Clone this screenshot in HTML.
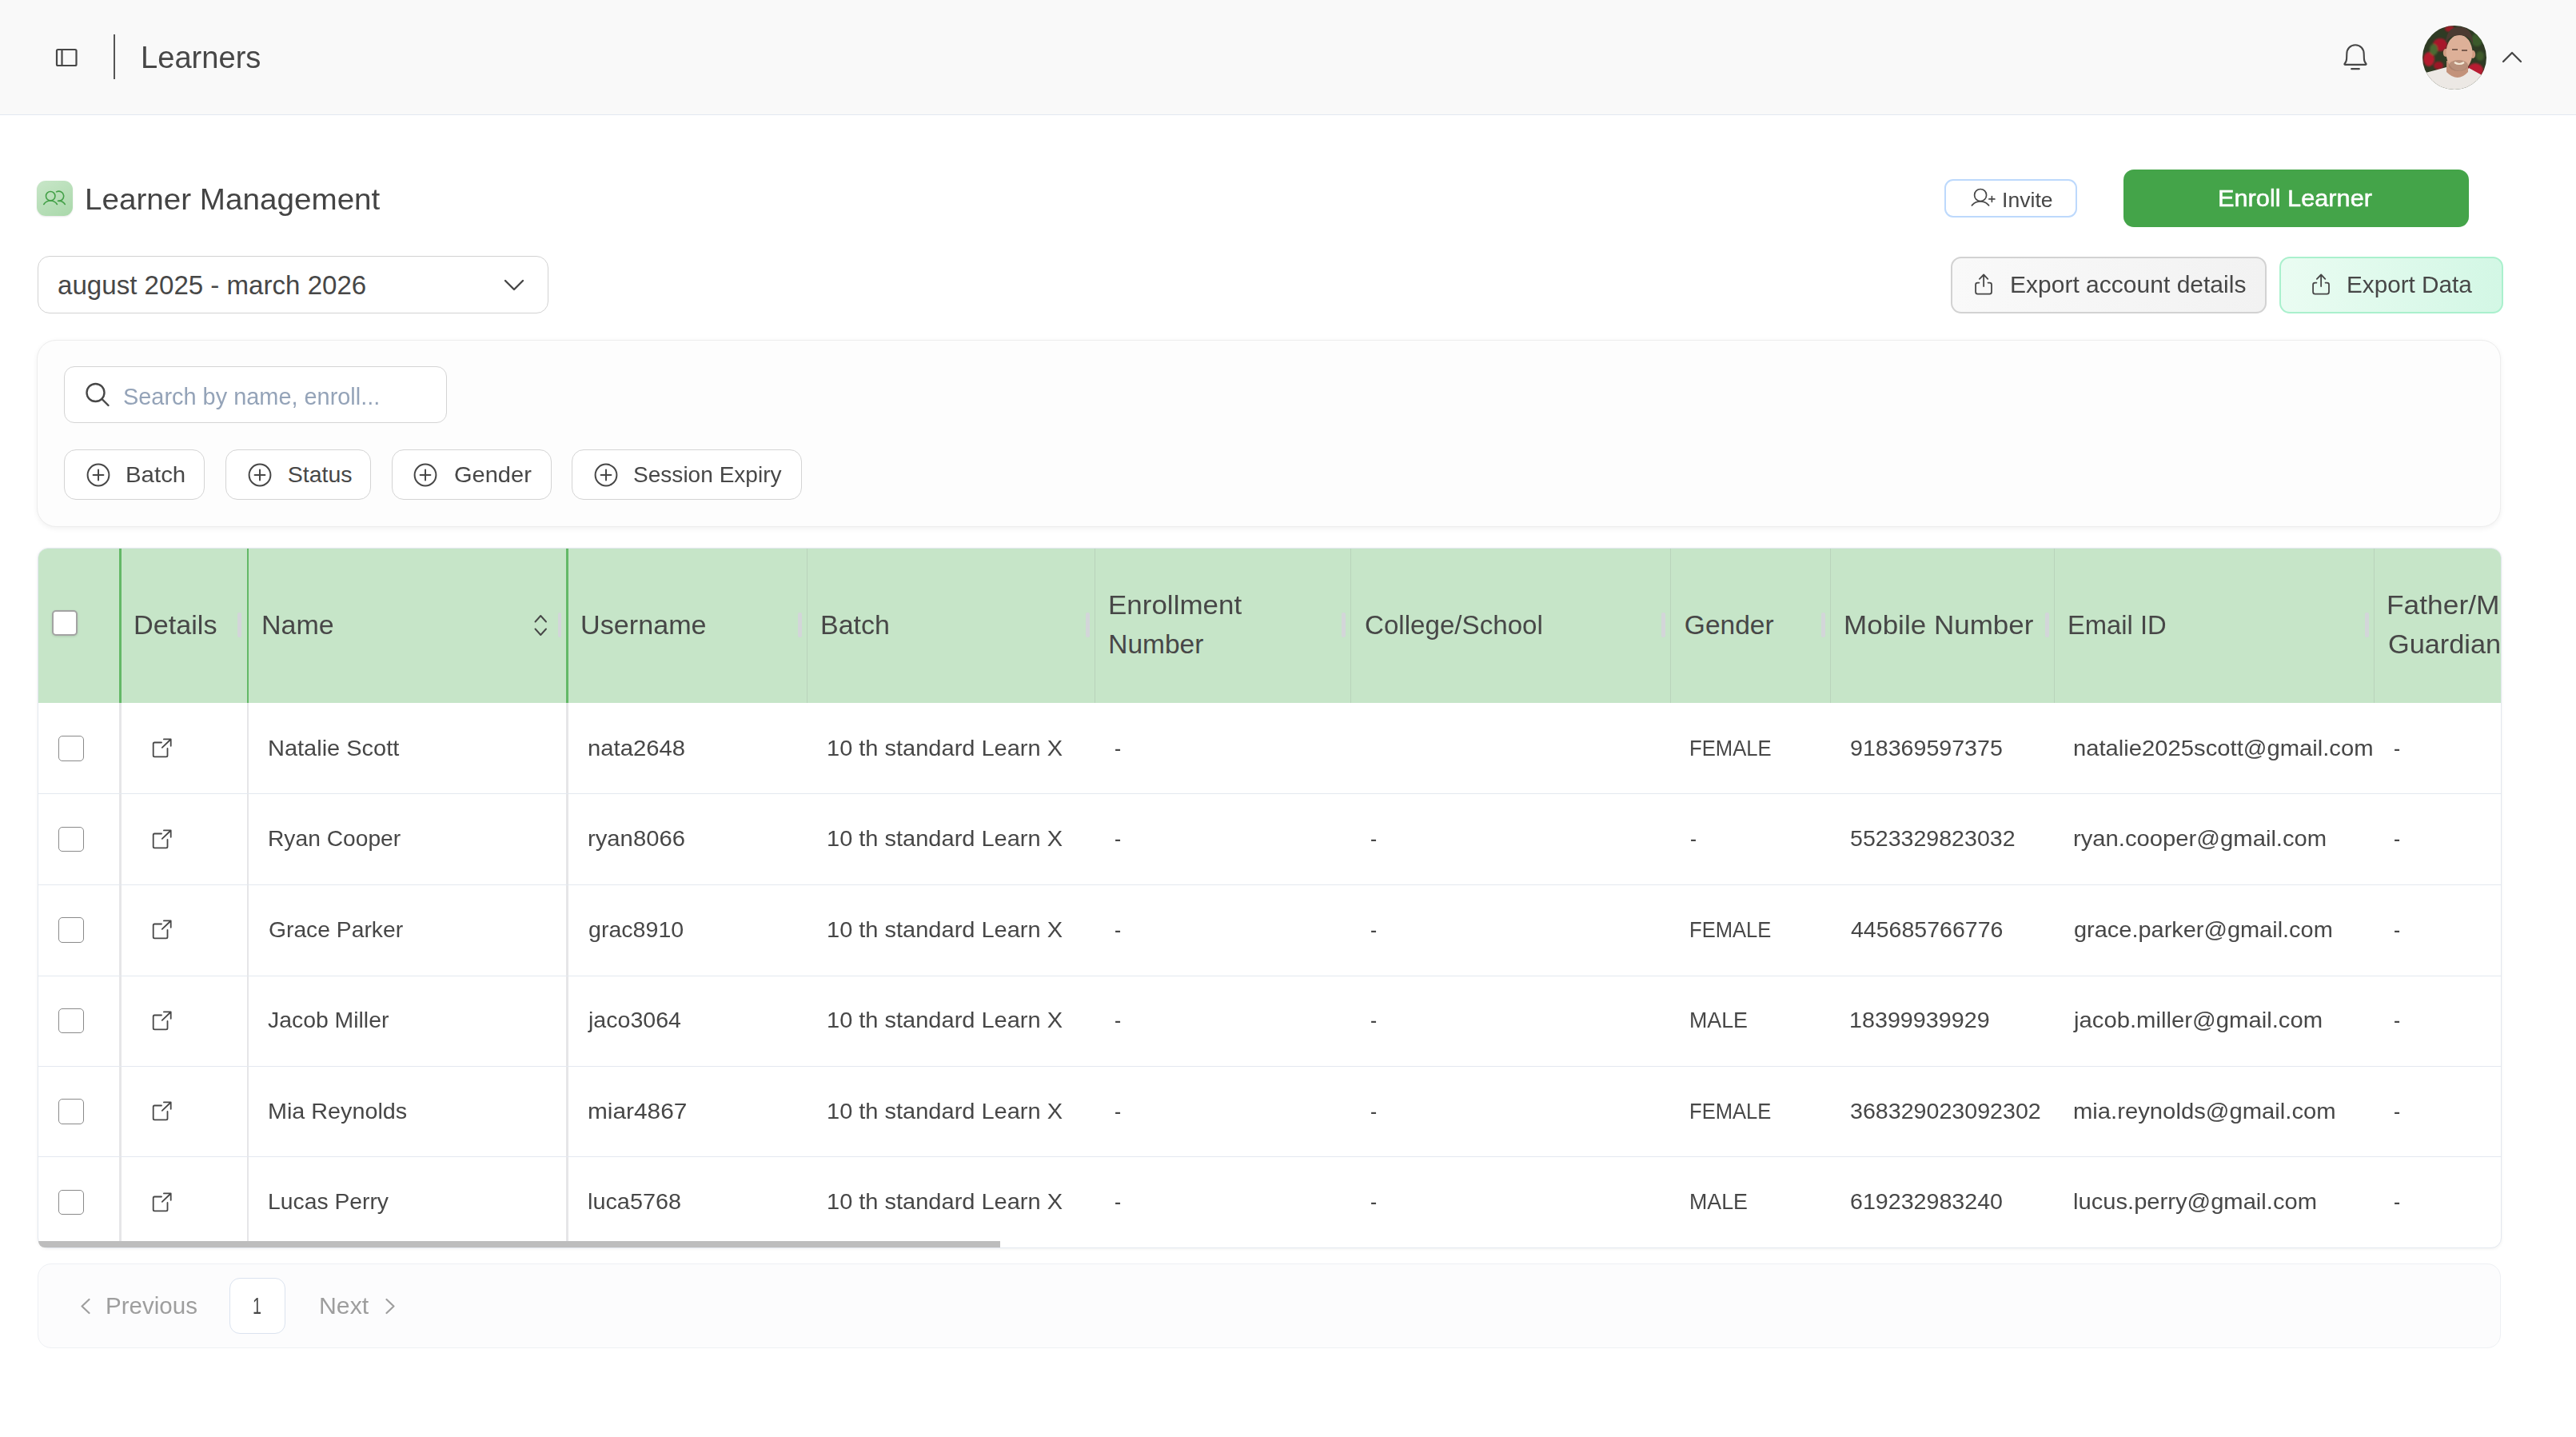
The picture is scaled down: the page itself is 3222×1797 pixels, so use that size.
<!DOCTYPE html>
<html><head><meta charset="utf-8"><title>Learners</title>
<style>
html,body{margin:0;padding:0;}
body{width:3222px;height:1797px;position:relative;overflow:hidden;background:#fff;font-family:"Liberation Sans",sans-serif;}
.t{position:absolute;white-space:nowrap;line-height:1;transform-origin:0 0;}
.r{position:absolute;}

</style></head><body>
<div class="r" style="left:0px;top:0px;width:3222px;height:143px;background:#f9f9f9;"></div>
<div class="r" style="left:0px;top:143px;width:3222px;height:1px;background:#e2e8f0;"></div>
<svg class="r" style="left:68px;top:59px;width:30px;height:26px;" viewBox="68 59 30 26" fill="none" stroke-linecap="round" stroke-linejoin="round"><rect x="71" y="62" width="24.5" height="20" rx="1.5" stroke="#474747" stroke-width="2.2"/><line x1="77.5" y1="62" x2="77.5" y2="82" stroke="#474747" stroke-width="2.2"/></svg>
<div class="r" style="left:142px;top:43px;width:2px;height:56px;background:#555;"></div>
<div class="t" style="left:175.86px;top:52.99px;font-size:38.40px;color:#474747;transform:scaleX(0.9927);">Learners</div>
<svg class="r" style="left:2926px;top:50px;width:40px;height:42px;" viewBox="2926 50 40 42" fill="none" stroke-linecap="round" stroke-linejoin="round"><path d="M2946 56.2C2939.6 56.2 2935.3 61 2935.3 67.5L2935.1 73C2935.1 76 2934.2 78 2932.7 79.4Q2931.7 80.9 2933.6 80.9L2958.4 80.9Q2960.3 80.9 2959.3 79.4C2957.8 78 2956.9 76 2956.9 73L2956.7 67.5C2956.7 61 2952.4 56.2 2946 56.2Z" stroke="#474747" stroke-width="2.1"/><path d="M2941.2 86.2H2950.8" stroke="#474747" stroke-width="2.2"/></svg>
<svg class="r" style="left:3030px;top:32px;width:80px;height:80px" viewBox="0 0 80 80"><defs><clipPath id="av"><circle cx="40" cy="40" r="40"/></clipPath><filter id="bl"><feGaussianBlur stdDeviation="1.2"/></filter></defs><g clip-path="url(#av)"><rect width="80" height="80" fill="#2f3b24"/><g filter="url(#bl)"><ellipse cx="22" cy="24" rx="9" ry="8" fill="#a8192b"/><ellipse cx="8" cy="42" rx="7" ry="9" fill="#b41d2f"/><ellipse cx="20" cy="50" rx="6" ry="5" fill="#9c1626"/><ellipse cx="66" cy="56" rx="10" ry="9" fill="#b81e30"/><ellipse cx="72" cy="38" rx="5" ry="6" fill="#3f5a2c"/><ellipse cx="14" cy="30" rx="5" ry="7" fill="#4c6b32"/><ellipse cx="68" cy="18" rx="7" ry="8" fill="#3a5a2a"/><ellipse cx="34" cy="4" rx="6" ry="4" fill="#9a1a28"/></g><path d="M0 60 L30 52 Q44 72 58 53 L78 64 L80 80 L0 80Z" fill="#ece8e4"/><path d="M30 44 L57 44 L57 58 Q44 72 30 58Z" fill="#c3927a"/><ellipse cx="29" cy="34" rx="3.2" ry="5" fill="#cf9c82"/><ellipse cx="63" cy="36" rx="3.2" ry="5" fill="#cf9c82"/><ellipse cx="46" cy="34" rx="16.5" ry="22.5" fill="#ddb098"/><ellipse cx="45" cy="50" rx="12" ry="7" fill="#9a7664" opacity=".55"/><path d="M29 22 Q30 2 46 1.5 Q63 2 63 24 Q60 12 46 12 Q33 12 29 22Z" fill="#4b3b31"/><path d="M37 30h7M49 31h7" stroke="#5a4036" stroke-width="1.6"/><path d="M40 46 Q46 50 52 46" stroke="#f4ead8" stroke-width="2.2" fill="none"/></g></svg>
<svg class="r" style="left:3126px;top:58px;width:32px;height:26px;" viewBox="3126 58 32 26" fill="none" stroke-linecap="round" stroke-linejoin="round"><path d="M3131 77 L3142 66 L3153 77" stroke="#474747" stroke-width="2.3"/></svg>
<div class="r" style="left:46px;top:226px;width:44.5px;height:44px;border-radius:9px;background:linear-gradient(150deg,#c8e6c8,#a9d8aa);box-shadow:0 1px 2px rgba(0,0,0,.10);border-radius:11px"></div>
<svg class="r" style="left:46px;top:226px;width:44.5px;height:44px;" viewBox="46 226 44.5 44" fill="none" stroke-linecap="round" stroke-linejoin="round"><circle cx="63.2" cy="245.2" r="5.7" stroke="#43a047" stroke-width="1.6"/><path d="M54.8 255.5A9.9 9.9 0 0 1 71.4 255.5" stroke="#43a047" stroke-width="1.6"/><path d="M70.6 239.9A6.1 6.1 0 1 1 72.4 251.2A9.6 9.6 0 0 1 81.3 255.5" stroke="#43a047" stroke-width="1.6"/></svg>
<div class="t" style="left:105.81px;top:230.58px;font-size:37.70px;color:#444444;transform:scaleX(1.0249);">Learner Management</div>
<div class="r" style="left:2432px;top:224px;width:165.5px;height:47.5px;box-sizing:border-box;border:2px solid #bdd9fc;border-radius:11px;background:#fff"></div>
<svg class="r" style="left:2458px;top:228px;width:45px;height:40px;" viewBox="2458 228 45 40" fill="none" stroke-linecap="round" stroke-linejoin="round"><circle cx="2477.1" cy="244" r="7.5" stroke="#474747" stroke-width="1.7"/><path d="M2466.35 256.95A13.65 13.65 0 0 1 2487.6 256.95" stroke="#474747" stroke-width="1.7"/><path d="M2491.4 245.5V252.3M2487.9 248.9H2494.9" stroke="#474747" stroke-width="1.7"/></svg>
<div class="t" style="left:2503.54px;top:236.57px;font-size:26.20px;color:#474747;transform:scaleX(1.0156);">Invite</div>
<div class="r" style="left:2655.5px;top:212px;width:432px;height:71.75px;border-radius:13px;background:#44a449"></div>
<div class="t" style="left:2774.46px;top:232.77px;font-size:29.80px;color:#ffffff;transform:scaleX(1.0313);-webkit-text-stroke:0.5px #fff;">Enroll Learner</div>
<div class="r" style="left:46.5px;top:320px;width:639px;height:72px;box-sizing:border-box;border:1.5px solid #d2d2d2;border-radius:15px;background:#fff"></div>
<div class="t" style="left:72.09px;top:339.97px;font-size:33.10px;color:#474747;">august 2025 - march 2026</div>
<svg class="r" style="left:628px;top:346px;width:30px;height:22px;" viewBox="628 346 30 22" fill="none" stroke-linecap="round" stroke-linejoin="round"><path d="M632 351 L643 362 L654 351" stroke="#474747" stroke-width="2.4"/></svg>
<div class="r" style="left:2440px;top:320.5px;width:394.5px;height:71px;box-sizing:border-box;border:2px solid #d2d2d2;border-radius:13px;background:linear-gradient(90deg,#f9f9f9,#f2f2f2)"></div>
<svg class="r" style="left:2460px;top:335px;width:45px;height:40px;" viewBox="0 0 45 40" fill="none" stroke-linecap="round" stroke-linejoin="round"><path d="M15.4 18.6H13.5Q11.1 18.6 11.1 21V30Q11.1 32.6 13.5 32.6H28.6Q31 32.6 31 30V21Q31 18.6 28.6 18.6H26.6" stroke="#474747" stroke-width="1.8"/><path d="M21.15 23.1V8.6M15.9 13.8L21.15 8.5L26.3 13.8" stroke="#474747" stroke-width="1.8"/></svg>
<div class="t" style="left:2513.52px;top:342.28px;font-size:28.60px;color:#474747;transform:scaleX(1.0501);">Export account details</div>
<div class="r" style="left:2851px;top:320.5px;width:279.5px;height:71px;box-sizing:border-box;border:2px solid #aaf0cd;border-radius:13px;background:linear-gradient(90deg,#eafcf2,#d3f7e5)"></div>
<svg class="r" style="left:2882.3px;top:335px;width:45.0px;height:40px;" viewBox="0 0 45 40" fill="none" stroke-linecap="round" stroke-linejoin="round"><path d="M15.4 18.6H13.5Q11.1 18.6 11.1 21V30Q11.1 32.6 13.5 32.6H28.6Q31 32.6 31 30V21Q31 18.6 28.6 18.6H26.6" stroke="#474747" stroke-width="1.8"/><path d="M21.15 23.1V8.6M15.9 13.8L21.15 8.5L26.3 13.8" stroke="#474747" stroke-width="1.8"/></svg>
<div class="t" style="left:2935.05px;top:342.28px;font-size:28.60px;color:#474747;transform:scaleX(1.0389);">Export Data</div>
<div class="r" style="left:46px;top:424.5px;width:3082px;height:234px;box-sizing:border-box;border:1px solid #ededed;border-radius:24px;background:#fdfdfd;box-shadow:0 2px 6px rgba(0,0,0,.06)"></div>
<div class="r" style="left:80px;top:458px;width:479px;height:71px;box-sizing:border-box;border:1.5px solid #d4d4d4;border-radius:13px;background:#fff"></div>
<svg class="r" style="left:104px;top:476px;width:36px;height:36px;" viewBox="0 0 36 36" fill="none" stroke-linecap="round" stroke-linejoin="round"><circle cx="15.5" cy="15" r="11" stroke="#474747" stroke-width="2.4"/><path d="M23.5 23 L31.5 31" stroke="#474747" stroke-width="2.4"/></svg>
<div class="t" style="left:154.20px;top:482.28px;font-size:28.60px;color:#94a3b8;transform:scaleX(1.0108);">Search by name, enroll...</div>
<div class="r" style="left:80px;top:562px;width:176px;height:63px;box-sizing:border-box;border:1.5px solid #d4d4d4;border-radius:15px;background:#fff"></div>
<svg class="r" style="left:106.0px;top:577px;width:34.0px;height:34px;" viewBox="0 0 34 34" fill="none" stroke-linecap="round" stroke-linejoin="round"><circle cx="17" cy="17" r="13.4" stroke="#474747" stroke-width="2"/><path d="M17 10.6v12.8M10.6 17h12.8" stroke="#474747" stroke-width="2"/></svg>
<div class="t" style="left:157.07px;top:578.87px;font-size:28.50px;color:#474747;transform:scaleX(1.0322);">Batch</div>
<div class="r" style="left:281.8px;top:562px;width:182.2px;height:63px;box-sizing:border-box;border:1.5px solid #d4d4d4;border-radius:15px;background:#fff"></div>
<svg class="r" style="left:307.6px;top:577px;width:34.0px;height:34px;" viewBox="0 0 34 34" fill="none" stroke-linecap="round" stroke-linejoin="round"><circle cx="17" cy="17" r="13.4" stroke="#474747" stroke-width="2"/><path d="M17 10.6v12.8M10.6 17h12.8" stroke="#474747" stroke-width="2"/></svg>
<div class="t" style="left:359.72px;top:578.87px;font-size:28.50px;color:#474747;">Status</div>
<div class="r" style="left:489.7px;top:562px;width:200.3px;height:63px;box-sizing:border-box;border:1.5px solid #d4d4d4;border-radius:15px;background:#fff"></div>
<svg class="r" style="left:515.3px;top:577px;width:34.0px;height:34px;" viewBox="0 0 34 34" fill="none" stroke-linecap="round" stroke-linejoin="round"><circle cx="17" cy="17" r="13.4" stroke="#474747" stroke-width="2"/><path d="M17 10.6v12.8M10.6 17h12.8" stroke="#474747" stroke-width="2"/></svg>
<div class="t" style="left:568.05px;top:578.87px;font-size:28.50px;color:#474747;transform:scaleX(1.0183);">Gender</div>
<div class="r" style="left:715px;top:562px;width:288.4px;height:63px;box-sizing:border-box;border:1.5px solid #d4d4d4;border-radius:15px;background:#fff"></div>
<svg class="r" style="left:741.0999999999999px;top:577px;width:34.0px;height:34px;" viewBox="0 0 34 34" fill="none" stroke-linecap="round" stroke-linejoin="round"><circle cx="17" cy="17" r="13.4" stroke="#474747" stroke-width="2"/><path d="M17 10.6v12.8M10.6 17h12.8" stroke="#474747" stroke-width="2"/></svg>
<div class="t" style="left:792.24px;top:578.87px;font-size:28.50px;color:#474747;transform:scaleX(0.9846);">Session Expiry</div>
<div class="r" style="left:47px;top:685px;width:3082px;height:876px;box-sizing:border-box;border:1px solid #e3e8ef;border-radius:13px;background:#fff;box-shadow:0 1px 4px rgba(0,0,0,.06)"></div>
<div class="r" style="left:48px;top:686px;width:3080px;height:193px;border-radius:12px 12px 0 0;background:#c6e5c8"></div>
<div class="r" style="left:149px;top:686px;width:2.5px;height:193px;background:#63b867;"></div>
<div class="r" style="left:149px;top:879px;width:2.5px;height:681px;background:#e6e6e8;"></div>
<div class="r" style="left:308.75px;top:686px;width:2.5px;height:193px;background:#63b867;"></div>
<div class="r" style="left:308.75px;top:879px;width:2.5px;height:681px;background:#e6e6e8;"></div>
<div class="r" style="left:708.25px;top:686px;width:2.5px;height:193px;background:#63b867;"></div>
<div class="r" style="left:708.25px;top:879px;width:2.5px;height:681px;background:#e6e6e8;"></div>
<div class="r" style="left:1009px;top:686px;width:1px;height:193px;background:#b9d3bb;"></div>
<div class="r" style="left:1369px;top:686px;width:1px;height:193px;background:#b9d3bb;"></div>
<div class="r" style="left:1689px;top:686px;width:1px;height:193px;background:#b9d3bb;"></div>
<div class="r" style="left:2089px;top:686px;width:1px;height:193px;background:#b9d3bb;"></div>
<div class="r" style="left:2289px;top:686px;width:1px;height:193px;background:#b9d3bb;"></div>
<div class="r" style="left:2569px;top:686px;width:1px;height:193px;background:#b9d3bb;"></div>
<div class="r" style="left:2969px;top:686px;width:1px;height:193px;background:#b9d3bb;"></div>
<div class="r" style="left:297px;top:766px;width:4.5px;height:31px;background:#d3d6d9;border-radius:2px;"></div>
<div class="r" style="left:697.5px;top:766px;width:4.5px;height:31px;background:#d3d6d9;border-radius:2px;"></div>
<div class="r" style="left:998px;top:766px;width:4.5px;height:31px;background:#d3d6d9;border-radius:2px;"></div>
<div class="r" style="left:1358px;top:766px;width:4.5px;height:31px;background:#d3d6d9;border-radius:2px;"></div>
<div class="r" style="left:1678px;top:766px;width:4.5px;height:31px;background:#d3d6d9;border-radius:2px;"></div>
<div class="r" style="left:2078px;top:766px;width:4.5px;height:31px;background:#d3d6d9;border-radius:2px;"></div>
<div class="r" style="left:2278px;top:766px;width:4.5px;height:31px;background:#d3d6d9;border-radius:2px;"></div>
<div class="r" style="left:2558px;top:766px;width:4.5px;height:31px;background:#d3d6d9;border-radius:2px;"></div>
<div class="r" style="left:2958px;top:766px;width:4.5px;height:31px;background:#d3d6d9;border-radius:2px;"></div>
<div class="r" style="left:65.2px;top:763px;width:31.6px;height:31.5px;box-sizing:border-box;border:2px solid #a3a3a3;border-radius:5px;background:#fff;box-shadow:0 1px 3px rgba(0,0,0,.12)"></div>
<div class="t" style="left:166.68px;top:765.39px;font-size:33.50px;color:#474747;transform:scaleX(1.0204);">Details</div>
<div class="t" style="left:326.69px;top:765.39px;font-size:33.50px;color:#474747;transform:scaleX(1.0156);">Name</div>
<svg class="r" style="left:665px;top:765px;width:23px;height:34px;" viewBox="665 765 23 34" fill="none" stroke-linecap="round" stroke-linejoin="round"><path d="M669.5 777.5L676.25 770L683 777.5M669.5 786.5L676.25 794L683 786.5" stroke="#474747" stroke-width="1.9"/></svg>
<div class="t" style="left:726.35px;top:765.39px;font-size:33.50px;color:#474747;transform:scaleX(1.0199);">Username</div>
<div class="t" style="left:1026.19px;top:765.39px;font-size:33.50px;color:#474747;transform:scaleX(1.0157);">Batch</div>
<div class="t" style="left:1386.12px;top:740.39px;font-size:33.50px;color:#474747;transform:scaleX(1.0438);">Enrollment</div>
<div class="t" style="left:1386.24px;top:788.64px;font-size:33.50px;color:#474747;">Number</div>
<div class="t" style="left:1706.84px;top:765.39px;font-size:33.50px;color:#474747;transform:scaleX(0.9890);">College/School</div>
<div class="t" style="left:2106.83px;top:765.39px;font-size:33.50px;color:#474747;">Gender</div>
<div class="t" style="left:2306.11px;top:765.39px;font-size:33.50px;color:#474747;transform:scaleX(1.0453);">Mobile Number</div>
<div class="t" style="left:2586.30px;top:765.39px;font-size:33.50px;color:#474747;transform:scaleX(0.9773);">Email ID</div>
<div class="r" style="left:2970px;top:686px;width:158px;height:193px;overflow:hidden">
<div class="t" style="left:15.33px;top:54.39px;font-size:33.50px;color:#474747;transform:scaleX(1.0550);">Father/Mother/</div>
<div class="t" style="left:16.53px;top:102.64px;font-size:33.50px;color:#474747;transform:scaleX(1.0243);">Guardian</div>
</div>
<div class="r" style="left:73px;top:920.2px;width:31.5px;height:31.5px;box-sizing:border-box;border:1.5px solid #8a8a8a;border-radius:5px;background:#fff"></div>
<svg class="r" style="left:180px;top:915.25px;width:45px;height:40.0px;" viewBox="0 0 45 40" fill="none" stroke-linecap="round" stroke-linejoin="round"><path d="M22 13.5H13.3Q11.7 13.5 11.7 15.1V29.85Q11.7 31.45 13.3 31.45H27.9Q29.5 31.45 29.5 29.85V20.9" stroke="#474747" stroke-width="1.8"/><path d="M24.9 9.46H33.7V17.8M33.1 10L22.8 19.9" stroke="#474747" stroke-width="1.8"/></svg>
<div class="t" style="left:334.61px;top:921.54px;font-size:28.00px;color:#474747;transform:scaleX(1.0353);">Natalie Scott</div>
<div class="t" style="left:735.03px;top:921.54px;font-size:28.00px;color:#474747;transform:scaleX(1.0446);">nata2648</div>
<div class="t" style="left:1034.32px;top:921.54px;font-size:28.00px;color:#474747;transform:scaleX(1.0357);">10 th standard Learn X</div>
<div class="t" style="left:1394.15px;top:921.54px;font-size:28.00px;color:#474747;transform:scaleX(0.8746);">-</div>
<div class="t" style="left:2113.38px;top:921.54px;font-size:28.00px;color:#474747;transform:scaleX(0.9165);">FEMALE</div>
<div class="t" style="left:2314.14px;top:921.54px;font-size:28.00px;color:#474747;transform:scaleX(1.0210);">918369597375</div>
<div class="t" style="left:2593.13px;top:921.54px;font-size:28.00px;color:#474747;transform:scaleX(1.0433);">natalie2025scott@gmail.com</div>
<div class="t" style="left:2994.40px;top:921.54px;font-size:28.00px;color:#474747;transform:scaleX(0.8746);">-</div>
<div class="r" style="left:48px;top:992px;width:3080px;height:1px;background:#e3e8ef;"></div>
<div class="r" style="left:73px;top:1033.8px;width:31.5px;height:31.5px;box-sizing:border-box;border:1.5px solid #8a8a8a;border-radius:5px;background:#fff"></div>
<svg class="r" style="left:180px;top:1028.75px;width:45px;height:40.0px;" viewBox="0 0 45 40" fill="none" stroke-linecap="round" stroke-linejoin="round"><path d="M22 13.5H13.3Q11.7 13.5 11.7 15.1V29.85Q11.7 31.45 13.3 31.45H27.9Q29.5 31.45 29.5 29.85V20.9" stroke="#474747" stroke-width="1.8"/><path d="M24.9 9.46H33.7V17.8M33.1 10L22.8 19.9" stroke="#474747" stroke-width="1.8"/></svg>
<div class="t" style="left:334.67px;top:1035.04px;font-size:28.00px;color:#474747;transform:scaleX(1.0070);">Ryan Cooper</div>
<div class="t" style="left:735.10px;top:1035.04px;font-size:28.00px;color:#474747;transform:scaleX(1.0444);">ryan8066</div>
<div class="t" style="left:1034.32px;top:1035.04px;font-size:28.00px;color:#474747;transform:scaleX(1.0357);">10 th standard Learn X</div>
<div class="t" style="left:1394.15px;top:1035.04px;font-size:28.00px;color:#474747;transform:scaleX(0.8746);">-</div>
<div class="t" style="left:1714.15px;top:1035.04px;font-size:28.00px;color:#474747;transform:scaleX(0.8746);">-</div>
<div class="t" style="left:2114.42px;top:1035.04px;font-size:28.00px;color:#474747;transform:scaleX(0.8601);">-</div>
<div class="t" style="left:2314.36px;top:1035.04px;font-size:28.00px;color:#474747;transform:scaleX(1.0204);">5523329823032</div>
<div class="t" style="left:2593.20px;top:1035.04px;font-size:28.00px;color:#474747;transform:scaleX(1.0439);">ryan.cooper@gmail.com</div>
<div class="t" style="left:2994.40px;top:1035.04px;font-size:28.00px;color:#474747;transform:scaleX(0.8746);">-</div>
<div class="r" style="left:48px;top:1106px;width:3080px;height:1px;background:#e3e8ef;"></div>
<div class="r" style="left:73px;top:1147.2px;width:31.5px;height:31.5px;box-sizing:border-box;border:1.5px solid #8a8a8a;border-radius:5px;background:#fff"></div>
<svg class="r" style="left:180px;top:1142.25px;width:45px;height:40.0px;" viewBox="0 0 45 40" fill="none" stroke-linecap="round" stroke-linejoin="round"><path d="M22 13.5H13.3Q11.7 13.5 11.7 15.1V29.85Q11.7 31.45 13.3 31.45H27.9Q29.5 31.45 29.5 29.85V20.9" stroke="#474747" stroke-width="1.8"/><path d="M24.9 9.46H33.7V17.8M33.1 10L22.8 19.9" stroke="#474747" stroke-width="1.8"/></svg>
<div class="t" style="left:335.59px;top:1148.54px;font-size:28.00px;color:#474747;transform:scaleX(1.0095);">Grace Parker</div>
<div class="t" style="left:735.79px;top:1148.54px;font-size:28.00px;color:#474747;transform:scaleX(1.0208);">grac8910</div>
<div class="t" style="left:1034.32px;top:1148.54px;font-size:28.00px;color:#474747;transform:scaleX(1.0357);">10 th standard Learn X</div>
<div class="t" style="left:1394.15px;top:1148.54px;font-size:28.00px;color:#474747;transform:scaleX(0.8746);">-</div>
<div class="t" style="left:1714.15px;top:1148.54px;font-size:28.00px;color:#474747;transform:scaleX(0.8746);">-</div>
<div class="t" style="left:2113.39px;top:1148.54px;font-size:28.00px;color:#474747;transform:scaleX(0.9137);">FEMALE</div>
<div class="t" style="left:2314.86px;top:1148.54px;font-size:28.00px;color:#474747;transform:scaleX(1.0189);">445685766776</div>
<div class="t" style="left:2593.87px;top:1148.54px;font-size:28.00px;color:#474747;transform:scaleX(1.0339);">grace.parker@gmail.com</div>
<div class="t" style="left:2994.40px;top:1148.54px;font-size:28.00px;color:#474747;transform:scaleX(0.8746);">-</div>
<div class="r" style="left:48px;top:1220px;width:3080px;height:1px;background:#e3e8ef;"></div>
<div class="r" style="left:73px;top:1260.8px;width:31.5px;height:31.5px;box-sizing:border-box;border:1.5px solid #8a8a8a;border-radius:5px;background:#fff"></div>
<svg class="r" style="left:180px;top:1255.75px;width:45px;height:40.0px;" viewBox="0 0 45 40" fill="none" stroke-linecap="round" stroke-linejoin="round"><path d="M22 13.5H13.3Q11.7 13.5 11.7 15.1V29.85Q11.7 31.45 13.3 31.45H27.9Q29.5 31.45 29.5 29.85V20.9" stroke="#474747" stroke-width="1.8"/><path d="M24.9 9.46H33.7V17.8M33.1 10L22.8 19.9" stroke="#474747" stroke-width="1.8"/></svg>
<div class="t" style="left:334.67px;top:1262.04px;font-size:28.00px;color:#474747;transform:scaleX(1.0132);">Jacob Miller</div>
<div class="t" style="left:735.71px;top:1262.04px;font-size:28.00px;color:#474747;transform:scaleX(1.0199);">jaco3064</div>
<div class="t" style="left:1034.32px;top:1262.04px;font-size:28.00px;color:#474747;transform:scaleX(1.0357);">10 th standard Learn X</div>
<div class="t" style="left:1394.15px;top:1262.04px;font-size:28.00px;color:#474747;transform:scaleX(0.8746);">-</div>
<div class="t" style="left:1714.15px;top:1262.04px;font-size:28.00px;color:#474747;transform:scaleX(0.8746);">-</div>
<div class="t" style="left:2113.29px;top:1262.04px;font-size:28.00px;color:#474747;transform:scaleX(0.9570);">MALE</div>
<div class="t" style="left:2313.35px;top:1262.04px;font-size:28.00px;color:#474747;transform:scaleX(1.0254);">18399939929</div>
<div class="t" style="left:2593.83px;top:1262.04px;font-size:28.00px;color:#474747;transform:scaleX(1.0454);">jacob.miller@gmail.com</div>
<div class="t" style="left:2994.40px;top:1262.04px;font-size:28.00px;color:#474747;transform:scaleX(0.8746);">-</div>
<div class="r" style="left:48px;top:1333px;width:3080px;height:1px;background:#e3e8ef;"></div>
<div class="r" style="left:73px;top:1374.2px;width:31.5px;height:31.5px;box-sizing:border-box;border:1.5px solid #8a8a8a;border-radius:5px;background:#fff"></div>
<svg class="r" style="left:180px;top:1369.25px;width:45px;height:40.0px;" viewBox="0 0 45 40" fill="none" stroke-linecap="round" stroke-linejoin="round"><path d="M22 13.5H13.3Q11.7 13.5 11.7 15.1V29.85Q11.7 31.45 13.3 31.45H27.9Q29.5 31.45 29.5 29.85V20.9" stroke="#474747" stroke-width="1.8"/><path d="M24.9 9.46H33.7V17.8M33.1 10L22.8 19.9" stroke="#474747" stroke-width="1.8"/></svg>
<div class="t" style="left:334.63px;top:1375.54px;font-size:28.00px;color:#474747;transform:scaleX(1.0269);">Mia Reynolds</div>
<div class="t" style="left:734.99px;top:1375.54px;font-size:28.00px;color:#474747;transform:scaleX(1.0653);">miar4867</div>
<div class="t" style="left:1034.32px;top:1375.54px;font-size:28.00px;color:#474747;transform:scaleX(1.0357);">10 th standard Learn X</div>
<div class="t" style="left:1394.15px;top:1375.54px;font-size:28.00px;color:#474747;transform:scaleX(0.8746);">-</div>
<div class="t" style="left:1714.15px;top:1375.54px;font-size:28.00px;color:#474747;transform:scaleX(0.8746);">-</div>
<div class="t" style="left:2113.39px;top:1375.54px;font-size:28.00px;color:#474747;transform:scaleX(0.9137);">FEMALE</div>
<div class="t" style="left:2314.43px;top:1375.54px;font-size:28.00px;color:#474747;transform:scaleX(1.0223);">368329023092302</div>
<div class="t" style="left:2593.13px;top:1375.54px;font-size:28.00px;color:#474747;transform:scaleX(1.0443);">mia.reynolds@gmail.com</div>
<div class="t" style="left:2994.40px;top:1375.54px;font-size:28.00px;color:#474747;transform:scaleX(0.8746);">-</div>
<div class="r" style="left:48px;top:1446px;width:3080px;height:1px;background:#e3e8ef;"></div>
<div class="r" style="left:73px;top:1487.8px;width:31.5px;height:31.5px;box-sizing:border-box;border:1.5px solid #8a8a8a;border-radius:5px;background:#fff"></div>
<svg class="r" style="left:180px;top:1482.75px;width:45px;height:40.0px;" viewBox="0 0 45 40" fill="none" stroke-linecap="round" stroke-linejoin="round"><path d="M22 13.5H13.3Q11.7 13.5 11.7 15.1V29.85Q11.7 31.45 13.3 31.45H27.9Q29.5 31.45 29.5 29.85V20.9" stroke="#474747" stroke-width="1.8"/><path d="M24.9 9.46H33.7V17.8M33.1 10L22.8 19.9" stroke="#474747" stroke-width="1.8"/></svg>
<div class="t" style="left:334.66px;top:1489.04px;font-size:28.00px;color:#474747;transform:scaleX(1.0109);">Lucas Perry</div>
<div class="t" style="left:735.05px;top:1489.04px;font-size:28.00px;color:#474747;transform:scaleX(1.0296);">luca5768</div>
<div class="t" style="left:1034.32px;top:1489.04px;font-size:28.00px;color:#474747;transform:scaleX(1.0357);">10 th standard Learn X</div>
<div class="t" style="left:1394.15px;top:1489.04px;font-size:28.00px;color:#474747;transform:scaleX(0.8746);">-</div>
<div class="t" style="left:1714.15px;top:1489.04px;font-size:28.00px;color:#474747;transform:scaleX(0.8746);">-</div>
<div class="t" style="left:2113.29px;top:1489.04px;font-size:28.00px;color:#474747;transform:scaleX(0.9570);">MALE</div>
<div class="t" style="left:2314.07px;top:1489.04px;font-size:28.00px;color:#474747;transform:scaleX(1.0223);">619232983240</div>
<div class="t" style="left:2593.13px;top:1489.04px;font-size:28.00px;color:#474747;transform:scaleX(1.0410);">lucus.perry@gmail.com</div>
<div class="t" style="left:2994.40px;top:1489.04px;font-size:28.00px;color:#474747;transform:scaleX(0.8746);">-</div>
<div class="r" style="left:48px;top:1552px;width:1203px;height:8px;background:#bdbdbd;border-radius:0 0 0 12px"></div>
<div class="r" style="left:47px;top:1579.5px;width:3081px;height:106px;box-sizing:border-box;border:1.5px solid #eef0f4;border-radius:17px;background:#fcfcfd"></div>
<svg class="r" style="left:98px;top:1620px;width:18px;height:26px;" viewBox="98 1620 18 26" fill="none" stroke-linecap="round" stroke-linejoin="round"><path d="M111.5 1625 L102.5 1633.5 L111.5 1642" stroke="#9e9e9e" stroke-width="2.2"/></svg>
<div class="t" style="left:131.56px;top:1618.78px;font-size:28.60px;color:#9e9e9e;transform:scaleX(1.0334);">Previous</div>
<div class="r" style="left:286.75px;top:1597.5px;width:70.5px;height:70.5px;box-sizing:border-box;border:1.5px solid #dbe3ef;border-radius:13px;background:#fff"></div>
<div class="t" style="left:316.03px;top:1618.78px;font-size:28.60px;color:#474747;transform:scaleX(0.6872);">1</div>
<div class="t" style="left:398.50px;top:1618.78px;font-size:28.60px;color:#9e9e9e;transform:scaleX(1.0587);">Next</div>
<svg class="r" style="left:479px;top:1620px;width:18px;height:26px;" viewBox="479 1620 18 26" fill="none" stroke-linecap="round" stroke-linejoin="round"><path d="M483.5 1625 L492.5 1633.5 L483.5 1642" stroke="#9e9e9e" stroke-width="2.2"/></svg>
</body></html>
